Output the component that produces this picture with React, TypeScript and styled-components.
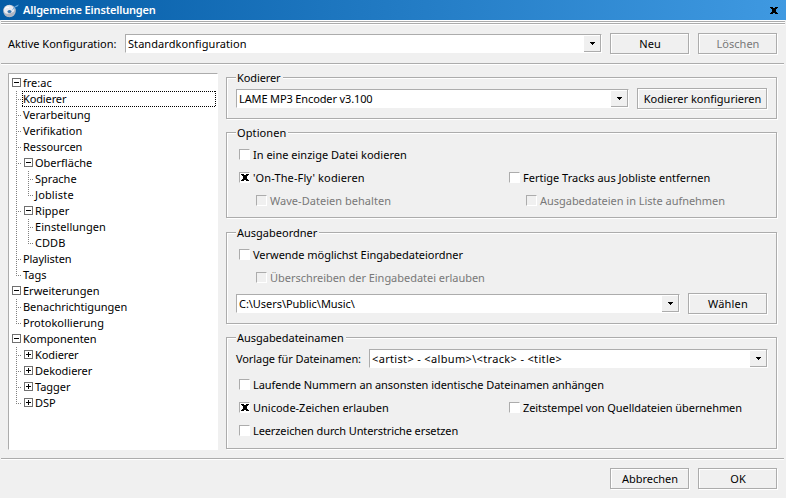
import React from 'react';
import styled, { createGlobalStyle, css } from 'styled-components';

const LINE = '#acacac';
const FACE = '#f0f0f0';

const GlobalStyle = createGlobalStyle`
  *, *::before, *::after { box-sizing: border-box; }
  body {
    margin: 0;
    background: ${FACE};
    color: #000;
    font: 11px/16px "Noto Sans", "Open Sans", sans-serif;
    white-space: nowrap;
    overflow: hidden;
    cursor: default;
  }
`;

const Window = styled.div`
  width: 786px;
  height: 498px;
  display: flex;
  flex-direction: column;
  background: ${FACE};
`;

const TitleBar = styled.header`
  height: 20px;
  flex: none;
  display: flex;
  align-items: center;
  padding: 0 8px 0 3px;
  background: linear-gradient(to right, #045ca6, #3f99e1);
`;

const Title = styled.h1`
  flex: 1;
  margin: 0 0 0 3px;
  color: #fff;
  font-size: 11px;
  font-weight: 600;
  line-height: 20px;
  letter-spacing: -0.16px;
`;

const TitleRule = styled.div`
  height: 5px;
  flex: none;
  margin: 0 1px;
  border: solid #fff;
  border-width: 1px 0;
  background: linear-gradient(${LINE} 0 1px, #fff 1px 2px, ${LINE} 2px 3px);
`;

const Separator = styled.hr`
  height: 2px;
  flex: none;
  width: 783px;
  margin: 0 0 0 1px;
  border: 0;
  background: linear-gradient(${LINE} 50%, #fff 50%);
`;

const ConfigBar = styled.div`
  height: 38px;
  flex: none;
  display: flex;
  align-items: center;
  padding: 0 9px 1px 8px;
`;

const Body = styled.main`
  height: 393px;
  flex: none;
  display: flex;
  gap: 8px;
  padding: 8px 9px 0 8px;
`;

const Footer = styled.footer`
  flex: 1;
  display: flex;
  justify-content: flex-end;
  gap: 9px;
  padding: 8px 9px 0 0;
`;

const Label = styled.span<{ $track?: number }>`
  line-height: 17px;
  letter-spacing: ${p => p.$track ?? 0}px;
`;

const ConfigLabel = styled(Label)`
  width: 117px;
`;

const etched = css`
  border: 1px solid ${LINE};
  box-shadow: inset 1px 1px #fff, 1px 1px #fff;
`;

const sunken = css`
  border: 1px solid;
  border-color: ${LINE} #fff #fff ${LINE};
`;

const Button = styled.button<{ $width?: number; $gap?: number; $track?: number }>`
  ${etched}
  flex: none;
  width: ${p => p.$width ?? 79}px;
  height: 21px;
  margin: 0 0 0 ${p => p.$gap ?? 0}px;
  padding: 0 0 0 1px;
  border-radius: 0;
  background: ${FACE};
  color: #000;
  font: inherit;
  line-height: 19px;
  letter-spacing: ${p => p.$track ?? 0}px;
  &:disabled { color: #787878; }
`;

const ComboBox = styled.div<{ $width: number }>`
  ${sunken}
  flex: none;
  display: flex;
  width: ${p => p.$width}px;
  height: 19px;
  padding-left: 2px;
  background: #fff;
  line-height: 17px;
`;

const ComboText = styled.span<{ $track?: number }>`
  flex: 1;
  letter-spacing: ${p => p.$track ?? 0}px;
`;

const ComboArrow = styled.span`
  width: 17px;
  height: 17px;
  display: flex;
  padding: 7px 0 0 6px;
  border: solid ${LINE};
  border-width: 0 1px 1px 0;
  background: ${FACE};
  box-shadow: inset 0 1px #fff;
`;

const TreeView = styled.nav`
  ${sunken}
  flex: none;
  width: 210px;
  height: 377px;
  padding: 1px 1px 0 3px;
  background: #fff;
`;

const Branch = styled.div<{ $nested?: boolean }>`
  margin-left: ${p => (p.$nested ? 5 : 4)}px;
`;

const Node = styled.div`
  position: relative;
  padding-left: 7px;

  &::before {
    content: '';
    position: absolute;
    left: 0;
    top: 0;
    bottom: 0;
    width: 1px;
    background: repeating-linear-gradient(#808080 0 1px, transparent 1px 2px);
  }
  &:last-child::before { bottom: auto; height: 9px; }

  &::after {
    content: '';
    position: absolute;
    left: 0;
    top: 8px;
    width: 5px;
    height: 1px;
    background: repeating-linear-gradient(to right, #808080 0 1px, transparent 1px 2px);
  }
`;

const RootNode = styled.div``;

const NodeRow = styled.div<{ $focused?: boolean; $leaf?: boolean; $track?: number }>`
  height: 16px;
  display: flex;
  margin-left: ${p => (p.$leaf ? -1 : 1)}px;
  padding-left: ${p => (p.$leaf ? 1 : 0)}px;
  letter-spacing: ${p => p.$track ?? 0}px;
  ${p => p.$focused && css`
    background:
      repeating-linear-gradient(to right, #000 0 1px, transparent 1px 2px) 0 0 / 100% 1px no-repeat,
      repeating-linear-gradient(to right, #000 0 1px, transparent 1px 2px) 0 100% / 100% 1px no-repeat,
      repeating-linear-gradient(#000 0 1px, transparent 1px 2px) 0 0 / 1px 100% no-repeat,
      repeating-linear-gradient(#000 0 1px, transparent 1px 2px) 100% 0 / 1px 100% no-repeat;
  `}
`;

const ExpanderBox = styled.svg`
  flex: none;
  width: 9px;
  height: 9px;
  margin: 3px 2px 0 0;
`;

const Settings = styled.div`
  flex: none;
  width: 551px;
  padding-top: 4px;
`;

const Group = styled.section<{ $height: number; $after?: number }>`
  ${etched}
  height: ${p => p.$height}px;
  margin-bottom: ${p => p.$after ?? 13}px;
  padding: 0 9px;
`;

const Legend = styled.h2<{ $track?: number }>`
  width: fit-content;
  height: 16px;
  margin: -8px 0 0;
  padding: 0 2px 0 1px;
  background: ${FACE};
  font: inherit;
  letter-spacing: ${p => p.$track ?? 0}px;
`;

const Line = styled.div<{ $top?: number }>`
  display: flex;
  align-items: center;
  height: 21px;
  margin-top: ${p => p.$top ?? 0}px;
`;

const TemplateField = styled.div`
  margin: 0 -1px 0 auto;
`;

const Checks = styled.div<{ $top: number }>`
  display: grid;
  grid-template-columns: 270px 1fr;
  grid-auto-rows: 23px;
  margin-top: ${p => p.$top}px;
  padding-left: 3px;
`;

const Check = styled.label<{ $disabled?: boolean; $wide?: boolean; $track?: number }>`
  display: flex;
  height: 16px;
  padding-left: ${p => (p.$disabled ? 17 : 0)}px;
  grid-column: ${p => (p.$wide ? '1 / -1' : 'auto')};
  color: ${p => (p.$disabled ? '#787878' : '#000')};
  letter-spacing: ${p => p.$track ?? 0}px;
`;

const Box = styled.span<{ $disabled?: boolean }>`
  ${sunken}
  flex: none;
  width: 11px;
  height: 11px;
  margin: 2px 3px 0 0;
  padding: 1px 0 0 1px;
  line-height: 0;
  background: ${p => (p.$disabled ? FACE : '#fff')};
`;

const CrossIcon = styled.svg`
  flex: none;
  display: block;
  width: 8px;
  height: 7px;
`;

const Cross = () => (
  <CrossIcon viewBox="0 0 8 7" shapeRendering="crispEdges">
    <path d="M0 0h3v1h2v-1h3v1h-1v1h-1v3h1v1h1v1h-3v-1h-2v1h-3v-1h1v-1h1v-3h-1v-1h-1z" />
  </CrossIcon>
);

const DiscLogo = () => (
  <svg width="17" height="16" viewBox="0 0 17 16">
    <ellipse cx="6.5" cy="9" rx="6.3" ry="6.2" fill="#b5bdca" />
    <ellipse cx="6" cy="8" rx="5.2" ry="4.7" fill="#e9ebf2" />
    <path d="M1 11q5 2 11-2q-1 5-5.500 6q-4 0-5.500-4z" fill="#aeb5c2" />
    <ellipse cx="6.500" cy="9.500" rx="2" ry="1.500" fill="#3475b0" />
    <path d="M2 6.500q2-2 4-1" stroke="#fff" fill="none" />
    <path d="M7 8.800q3-.5 3.500-3q2-2.500 5.500-3.300q-1 2.300-4 3q-1.500 3-5 3.300z" fill="#67a8df" />
  </svg>
);

const Expander = ({ open }: { open?: boolean }) => (
  <ExpanderBox viewBox="0 0 9 9" shapeRendering="crispEdges">
    <rect x=".5" y=".5" width="8" height="8" fill="#fff" stroke="#707070" />
    <path d={open ? 'M2 4h5v1h-5z' : 'M2 4h2v-2h1v2h2v1h-2v2h-1v-2h-2z'} />
  </ExpanderBox>
);

type ComboProps = { width: number; value: string; track?: number };

const Combo = ({ width, value, track }: ComboProps) => (
  <ComboBox $width={width}>
    <ComboText $track={track}>{value}</ComboText>
    <ComboArrow>
      <svg width="5" height="3" viewBox="0 0 5 3" shapeRendering="crispEdges">
        <path d="M0 0h5v1h-1v1h-1v1h-1v-1h-1v-1h-1z" />
      </svg>
    </ComboArrow>
  </ComboBox>
);

type OptionProps = { text: string; checked?: boolean; disabled?: boolean; wide?: boolean; track?: number };

const Option = ({ text, checked, disabled, wide, track }: OptionProps) => (
  <Check $disabled={disabled} $wide={wide} $track={track}>
    <Box $disabled={disabled}>{checked && <Cross />}</Box>
    {text}
  </Check>
);

type Item = { name: string; track?: number; open?: boolean; closed?: boolean; focused?: boolean; items?: Item[] };

const tree: Item[] = [
  {
    name: 'fre:ac', open: true, items: [
      { name: 'Kodierer', track: -0.12, focused: true },
      { name: 'Verarbeitung', track: -0.03 },
      { name: 'Verifikation', track: 0.03 },
      { name: 'Ressourcen', track: -0.03 },
      { name: 'Oberfläche', open: true, items: [{ name: 'Sprache' }, { name: 'Jobliste', track: 0.15 }] },
      { name: 'Ripper', track: 0.05, open: true, items: [{ name: 'Einstellungen', track: 0.05 }, { name: 'CDDB', track: 0.05 }] },
      { name: 'Playlisten', track: -0.06 },
      { name: 'Tags' },
    ],
  },
  { name: 'Erweiterungen', open: true, items: [{ name: 'Benachrichtigungen', track: -0.03 }, { name: 'Protokollierung', track: 0.04 }] },
  {
    name: 'Komponenten', track: -0.04, open: true, items: [
      { name: 'Kodierer', track: -0.1, closed: true },
      { name: 'Dekodierer', track: -0.04, closed: true },
      { name: 'Tagger', track: -0.04, closed: true },
      { name: 'DSP', closed: true },
    ],
  },
];

const TreeItem = ({ item, root }: { item: Item; root?: boolean }) => {
  const Shell = root ? RootNode : Node;
  const expandable = item.open || item.closed;
  return (
    <Shell>
      <NodeRow $leaf={!expandable || root} $focused={item.focused} $track={item.track}>
        {expandable && <Expander open={item.open} />}
        {item.name}
      </NodeRow>
      {item.items && (
        <Branch $nested={!root}>
          {item.items.map(child => <TreeItem key={child.name} item={child} />)}
        </Branch>
      )}
    </Shell>
  );
};

export default function App() {
  return (
    <Window>
      <GlobalStyle />
      <TitleBar>
        <DiscLogo />
        <Title>Allgemeine Einstellungen</Title>
        <Cross />
      </TitleBar>
      <TitleRule />
      <ConfigBar>
        <ConfigLabel>Aktive Konfiguration:</ConfigLabel>
        <Combo width={477} value="Standardkonfiguration" track={0.06} />
        <Button $gap={8}>Neu</Button>
        <Button $gap={9} disabled>Löschen</Button>
      </ConfigBar>
      <Separator />
      <Body>
        <TreeView>
          {tree.map(item => <TreeItem key={item.name} item={item} root />)}
        </TreeView>
        <Settings>
          <Group $height={42} $after={13}>
            <Legend $track={-0.1}>Kodierer</Legend>
            <Line $top={2}>
              <Combo width={393} value="LAME MP3 Encoder v3.100" track={-0.13} />
              <Button $width={130} $gap={8}>Kodierer konfigurieren</Button>
            </Line>
          </Group>
          <Group $height={86} $after={14}>
            <Legend $track={0.1}>Optionen</Legend>
            <Checks $top={6}>
              <Option wide text="In eine einzige Datei kodieren" />
              <Option checked text="'On-The-Fly' kodieren" track={0.12} />
              <Option text="Fertige Tracks aus Jobliste entfernen" />
              <Option disabled text="Wave-Dateien behalten" track={0.03} />
              <Option disabled text="Ausgabedateien in Liste aufnehmen" track={-0.03} />
            </Checks>
          </Group>
          <Group $height={92} $after={13}>
            <Legend>Ausgabeordner</Legend>
            <Checks $top={6}>
              <Option wide text="Verwende möglichst Eingabedateiordner" track={-0.03} />
              <Option wide disabled text="Überschreiben der Eingabedatei erlauben" track={-0.03} />
            </Checks>
            <Line>
              <Combo width={444} value="C:\Users\Public\Music\" track={-0.05} />
              <Button $gap={8} $track={0.2}>Wählen</Button>
            </Line>
          </Group>
          <Group $height={112} $after={0}>
            <Legend $track={-0.03}>Ausgabedateinamen</Legend>
            <Line $top={2}>
              <Label $track={-0.08}>Vorlage für Dateinamen:</Label>
              <TemplateField>
                <Combo width={399} value="<artist> - <album>\<track> - <title>" track={0.34} />
              </TemplateField>
            </Line>
            <Checks $top={8}>
              <Option wide text="Laufende Nummern an ansonsten identische Dateinamen anhängen" track={-0.065} />
              <Option checked text="Unicode-Zeichen erlauben" />
              <Option text="Zeitstempel von Quelldateien übernehmen" track={-0.08} />
              <Option wide text="Leerzeichen durch Unterstriche ersetzen" track={-0.11} />
            </Checks>
          </Group>
        </Settings>
      </Body>
      <Separator />
      <Footer>
        <Button>Abbrechen</Button>
        <Button>OK</Button>
      </Footer>
    </Window>
  );
}
